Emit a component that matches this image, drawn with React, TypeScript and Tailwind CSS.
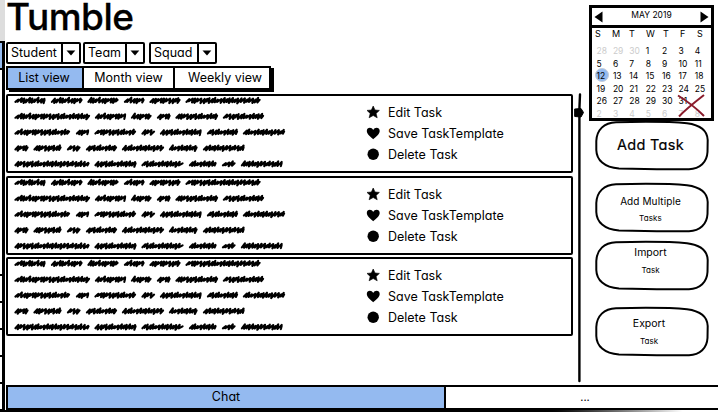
import React from "react";

const ROWS: [number, number][][] = [
  [[14.5, 45.5], [51, 82.5], [87.5, 118.5], [124, 144.5], [149.5, 180.5], [185.5, 260.5]],
  [[14.5, 90], [95, 126], [131, 151.5], [157, 170.5], [175.5, 218], [223, 264]],
  [[14.5, 70], [76, 89], [94.5, 136], [141.5, 155], [160, 201.5], [207, 238], [243, 285]],
  [[14.5, 28.5], [33.5, 61.5], [67, 80.5], [86, 117], [122, 164], [169, 197.5], [203, 244.5]],
  [[14.5, 89.5], [94.5, 136.5], [141.5, 183.5], [189, 216.5], [222, 235.5], [241, 282.5]],
];

// Pen-scribble standing in for one word: slanted strokes of uneven height and drift.
const HEIGHTS = [1.1, 1.9, 2.2, 1.4, 2.3, 2.1, 1.3, 2.4, 1.8, 2.2];
const STEPS = [3.4, 2.5, 2.3, 3.4, 2.4, 2.6, 3.5];
const DRIFT = [0.2, -0.4, 0.3, 0.5, -0.3, 0.1];

function scribble(x0: number, x1: number, y: number, seed: number) {
  let d = `M${x0 + 0.9} ${y + 1.4}`;
  let x = x0 + 0.9;
  let i = seed;
  while (x + 3.6 < x1) {
    const h = HEIGHTS[i % HEIGHTS.length];
    const c = y + DRIFT[i % DRIFT.length];
    d += `L${(x + 3).toFixed(1)} ${(c - h).toFixed(1)}L${(x + 2.2).toFixed(1)} ${(c + h).toFixed(1)}`;
    x += STEPS[i % STEPS.length];
    i++;
  }
  return d + `L${x1 - 0.9} ${y - 0.6}`;
}

function Scribbles() {
  return (
    <svg width="290" height="75" className="block shrink-0" fill="none" stroke="#000" strokeWidth="2.1" strokeLinecap="round" strokeLinejoin="round">
      {ROWS.map((row, r) =>
        row.map(([a, b], i) => <path key={`${r}-${i}`} d={scribble(a - 8, b - 8, 4.5 + r * 15.85, r * 3 + i * 2)} />)
      )}
    </svg>
  );
}

function TaskCard() {
  return (
    <section className="flex h-[79px] w-[567px] rounded-[2px] border-2 border-black">
      <Scribbles />
      <ul className="ml-[68px] flex flex-col pt-[5px] text-[12.5px]">
        <li className="flex h-[21px] items-center gap-[7px]">
          <svg width="15" height="14" viewBox="0 0 15 14"><path d="M7.2 1L9 5L13.4 5.4L10.1 8.4L11.2 12.8L7.2 10.5L3.1 12.8L4.2 8.4L1 5.4L5.4 5Z" stroke="#000" strokeWidth=".6" strokeLinejoin="round" /></svg>
          <span className="pt-[3px]">Edit Task</span>
        </li>
        <li className="flex h-[21px] items-center gap-[7px]">
          <svg width="15" height="14" viewBox="0 0 15 14"><path d="M7.2 13.2C5.5 11.4 .8 8.4 .8 4.9C.8 1.2 5.6 .9 7.2 3.9C8.8 .9 13.7 1.2 13.7 4.9C13.7 8.4 9 11.4 7.2 13.2Z" /></svg>
          <span className="pt-[3px]">Save TaskTemplate</span>
        </li>
        <li className="flex h-[21px] items-center gap-[7px]">
          <svg width="15" height="14" viewBox="0 0 15 14"><circle cx="7.2" cy="7.2" r="5.7" /></svg>
          <span className="pt-[3px]">Delete Task</span>
        </li>
      </ul>
    </section>
  );
}

function Select({ label, className }: { label: string; className: string }) {
  return (
    <div className={`flex h-[22px] rounded-[2px] border-2 border-black text-[12.5px] ${className}`}>
      <span className="flex flex-1 items-center pl-[3px]">{label}</span>
      <span className="flex w-[18px] items-center justify-center border-l-2 border-black">
        <svg width="10" height="6"><path d="M.5 .5H9.3L5 5.5Z" /></svg>
      </span>
    </div>
  );
}

function PillButton({ title, sub, className }: { title: string; sub?: string; className: string }) {
  return (
    <button className={`relative ml-[11px] flex h-[49px] w-[114px] shrink-0 flex-col items-center ${className}`}>
      <svg className="absolute inset-0 overflow-visible" width="114" height="49" fill="none" stroke="#000" strokeWidth="2">
        <path d="M21 1.2C50 .6 78 .9 92 2.2C106 4 112.4 10 112.7 19L112.5 31C112 41 105 48 94 48.2C70 48.6 45 48.2 24 47.6C9 46.4 1.6 39 1.3 29L1.3 20C1.7 9 9 1.6 21 1.2Z" />
      </svg>
      <span className="whitespace-nowrap">{title}</span>
      {sub && <span className="text-[8px] leading-[10px]">{sub}</span>}
    </button>
  );
}

const WEEKS = [
  ["28", "29", "30", "1", "2", "3", "4"],
  ["5", "6", "7", "8", "9", "10", "11"],
  ["12", "13", "14", "15", "16", "17", "18"],
  ["19", "20", "21", "22", "23", "24", "25"],
  ["26", "27", "28", "29", "30", "31", ""],
  ["2", "3", "4", "5", "6", "7", "8"],
];

function Calendar() {
  return (
    <div className="relative mt-[5px] ml-[5px] h-[116px] w-[125px] shrink-0 border-3 border-black">
      <div className="flex h-5 items-center justify-between border-b-3 border-black px-[2px] text-[8.5px]">
        <svg width="9" height="12"><path d="M8.5 .5V11.5L.5 6Z" /></svg>
        <span className="mb-[3px] leading-[12px]">MAY 2019</span>
        <svg width="9" height="12"><path d="M.5 .5V11.5L8.5 6Z" /></svg>
      </div>
      <div className="grid h-[16px] grid-cols-[repeat(7,17px)] pl-[3px] text-[9px] leading-[12px]">
        {["S", "M", "T", "W", "T", "F", "S"].map((d, i) => <span key={i}>{d}</span>)}
      </div>
      <div className="absolute top-[60px] left-[3px] size-[14px] rounded-full border border-[#c4ccd8] bg-[#94baf0]" />
      <div className="relative grid grid-cols-[repeat(7,16.4px)] pt-[1px] pl-[4.5px] text-[8.5px] leading-[12.5px]">
        {WEEKS.flatMap((w, r) =>
          w.map((n, c) => (
            <span key={`${r}-${c}`} className={(r === 0 && c < 3) || r === 5 ? "text-[#cccccc]" : "text-black"}>{n || "\u00a0"}</span>
          ))
        )}
      </div>
      <svg className="absolute top-[86px] left-[85px]" width="30" height="24" fill="none" stroke="#8a1c2c" strokeWidth="2">
        <path d="M1 1.5C10 7 19 14 27 22M27 1C18 8 9 15 2 22.5" />
      </svg>
    </div>
  );
}

function Strip() {
  return (
    <div className="flex h-full w-[5px] shrink-0 flex-col">
      <div className="h-[41px] bg-[#dddddd]" />
      <div className="h-[29px] border-y-2 border-r-3 border-black bg-[#94baf0]" />
      <div className="h-[206px] border-r-3 border-b-2 border-black" />
      <div className="h-[27px] border-r-3 border-b-2 border-black" />
      <div className="h-[27px] border-r-3 border-b-2 border-black" />
      <div className="h-[27px] border-r-3 border-b-2 border-black" />
      <div className="h-[27px] border-r-3 border-b-2 border-black" />
      <div className="h-[28px] border-r-3 border-b-3 border-black" />
    </div>
  );
}

export default function App() {
  return (
    <div className="flex h-[412px] w-[718px] overflow-hidden bg-white font-['Inter',sans-serif] text-black [font-feature-settings:'cv11','ss03']">
      <Strip />
      <div className="flex w-[713px] flex-col">
        <div className="flex h-[385px]">
          <main className="flex w-[569px] flex-col pl-px">
            <h1 className="h-[42px] text-[37px] leading-[34px] font-medium tracking-[-0.5px] [-webkit-text-stroke:0.3px_#000]">Tumble</h1>
            <div className="flex">
              <Select label="Student" className="w-[75px]" />
              <Select label="Team" className="ml-[2px] w-[62px]" />
              <Select label="Squad" className="ml-[4px] w-[68px]" />
            </div>
            <nav className="mt-[2px] flex h-[24px] w-[265px] border-2 border-black text-[12.5px] shadow-[3px_2px_0_#000]">
              <span className="flex w-[74px] items-center justify-center bg-[#94baf0] pr-[2px]">List view</span>
              <span className="flex w-[93px] items-center justify-center border-x-2 border-black">Month view</span>
              <span className="flex flex-1 items-center justify-center pl-[6px]">Weekly view</span>
            </nav>
            <div className="mt-[4px] flex flex-col">
              <TaskCard />
              <div className="h-[3px]" />
              <TaskCard />
              <div className="h-[2px]" />
              <TaskCard />
            </div>
          </main>
          <svg className="mt-[93px] shrink-0" width="10" height="290" fill="none" stroke="#000" strokeWidth="2.4" strokeLinecap="round">
            <path d="M6 1.5C5.8 8 5.3 14 5.4 20V288" />
            <path d="M1 16L7 15.5L9.5 19.5L7 24L1 23.5Z" fill="#000" strokeWidth="1" />
          </svg>
          <aside className="flex w-[134px] flex-col">
            <Calendar />
            <PillButton title="Add Task" className="pt-[13px] pr-[3px] text-[14.5px] tracking-[0.3px] [-webkit-text-stroke:0.2px_#000]" />
            <PillButton title="Add Multiple" sub="Tasks" className="mt-[13px] gap-[5px] pt-[11px] pr-[3px] text-[10px] leading-[14px] tracking-[0.1px]" />
            <PillButton title="Import" sub="Task" className="mt-[9px] gap-[5px] pt-[5px] pr-[3px] text-[10.5px] leading-[14px]" />
            <PillButton title="Export" sub="Task" className="mt-[17px] gap-[5px] pt-[10px] pr-[6px] text-[10.5px] leading-[14px]" />
          </aside>
        </div>
        <footer className="ml-px flex h-[25px] border-y-2 border-l-2 border-black text-[12.5px]">
          <span className="flex w-[438px] items-center justify-center border-r-2 border-black bg-[#94baf0]">Chat</span>
          <span className="flex flex-1 items-center justify-center pl-[6px] text-[11px]">...</span>
        </footer>
        <div className="h-[2px] bg-linear-to-r from-black from-75% to-white to-95%" />
      </div>
    </div>
  );
}
